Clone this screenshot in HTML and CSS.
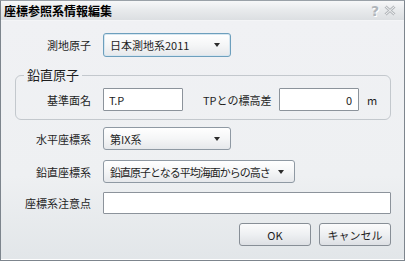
FILE: index.html
```html
<!DOCTYPE html>
<html lang="ja">
<head>
  <meta charset="UTF-8" />
  <title>座標参照系情報編集</title>
  <link rel="stylesheet" href="styles.css">
</head>
<body>
  <div class="window">
    <div class="titlebar">
      <span class="title">座標参照系情報編集</span>
      <span class="tb-icons">
        <span class="help">?</span>
        <svg class="close" width="12" height="11" viewBox="0 0 12 11">
          <path d="M1.5 1.5 L10.5 9.5 M10.5 1.5 L1.5 9.5" stroke="#b4b8bc" stroke-width="3" fill="none" />
          <path d="M1.5 1.5 L10.5 9.5 M10.5 1.5 L1.5 9.5" stroke="#f4f5f6" stroke-width="1" fill="none" />
        </svg>
      </span>
    </div>

    <div class="content">
      <div class="row row-datum">
        <span class="lbl">測地原子</span>
        <div class="combo combo-focus w128"><span>日本測地系2011</span><i class="arrow"></i></div>
      </div>

      <fieldset class="group">
        <legend>鉛直原子</legend>
        <div class="row">
          <span class="lbl lbl-in">基準面名</span>
          <input class="field w80" type="text" value="T.P" />
          <span class="lbl-tp">TPとの標高差</span>
          <input class="field w80 num" type="text" value="0" />
          <span class="unit">m</span>
        </div>
      </fieldset>

      <div class="row row-horiz">
        <span class="lbl">水平座標系</span>
        <div class="combo w128"><span>第IX系</span><i class="arrow"></i></div>
      </div>

      <div class="row row-vert">
        <span class="lbl">鉛直座標系</span>
        <div class="combo w192"><span class="tight">鉛直原子となる平均海面からの高さ</span><i class="arrow"></i></div>
      </div>

      <div class="row row-note">
        <span class="lbl">座標系注意点</span>
        <input class="field w288" type="text" value="" />
      </div>

      <div class="buttons">
        <button class="btn">OK</button>
        <button class="btn">キャンセル</button>
      </div>
    </div>
  </div>
</body>
</html>
```

FILE: styles.css
```css
body {
  margin: 0;
  padding: 0;
  background: #ffffff;
  font-family: "Noto Sans CJK JP", "Liberation Sans", sans-serif;
  font-size: 11px;
  color: #1e1e1e;
}

.window {
  width: 405px;
  height: 261px;
  box-sizing: border-box;
  border: 1px solid #7d858d;
  border-top-color: #9aa1a8;
  display: flex;
  flex-direction: column;
  overflow: hidden;
}

.titlebar {
  height: 19px;
  flex: none;
  display: flex;
  align-items: center;
  justify-content: space-between;
  padding: 0 8px 0 3px;
  background: linear-gradient(#f7f8f9, #e9ebed 45%, #dcdfe2);
  border-bottom: 1px solid #f4f5f7;
}

.title {
  font-size: 12px;
  font-weight: bold;
  color: #000;
  line-height: 19px;
}

.tb-icons {
  display: flex;
  align-items: center;
  gap: 5px;
}

.help {
  font-family: "DejaVu Sans", sans-serif;
  font-weight: bold;
  font-size: 14px;
  line-height: 14px;
  color: #b0b5ba;
  text-shadow: 1px 1px 0 #ffffff;
}

.content {
  flex: 1;
  padding: 12px 13px 0 14px;
  background: linear-gradient(#f0f1f4, #eef0f2 65%, #e2e6e9);
  border-bottom: 1px solid #ffffff;
}

.row {
  display: flex;
  align-items: center;
  height: 23px;
}

.lbl {
  width: 76px;
  margin-right: 12px;
  text-align: right;
  white-space: nowrap;
}

.lbl-in {
  width: 75px;
}

.lbl-tp {
  width: 76px;
  margin-left: 20px;
  white-space: nowrap;
}

.unit {
  margin-left: 8px;
}

.combo {
  height: 23px;
  box-sizing: border-box;
  display: flex;
  align-items: center;
  justify-content: space-between;
  padding: 0 10px 0 6px;
  border: 1px solid #8f99a3;
  border-radius: 3px;
  background: linear-gradient(#ffffff, #f5f6f7 50%, #e6e8eb);
  white-space: nowrap;
}

.combo .tight {
  letter-spacing: -1px;
}

.combo-focus {
  height: 24px;
  border-color: #6d9fbd;
  box-shadow: inset 0 0 0 1px #d6e6f0;
}

.arrow {
  flex: none;
  width: 0;
  height: 0;
  border-left: 3.5px solid transparent;
  border-right: 3.5px solid transparent;
  border-top: 4px solid #2c2c2c;
}

.w128 { width: 128px; }
.w192 { width: 192px; }
.w80 { width: 80px; }
.w288 { width: 288px; }

.field {
  height: 23px;
  box-sizing: border-box;
  margin: 0;
  padding: 0 5px;
  border: 1px solid #8c939b;
  border-radius: 1px;
  background: #ffffff;
  font-family: inherit;
  font-size: 11px;
  color: #1e1e1e;
  outline: none;
}

.num {
  text-align: right;
  padding-right: 6px;
}

.row-datum {
  height: 24px;
}

.group {
  margin: 10px 0 0 0;
  width: 376px;
  box-sizing: border-box;
  padding: 5px 0 8px 0;
  border: 1px solid #c3c8cd;
  border-radius: 6px;
}

.group legend {
  font-size: 13px;
  line-height: 16px;
  padding: 0 3px;
  margin-left: 8px;
  color: #1e1e1e;
}

.row-horiz {
  margin-top: 7px;
}

.row-vert {
  margin-top: 10px;
}

.row-note {
  margin-top: 9px;
  height: 22px;
}

.row-note .field {
  height: 22px;
}

.buttons {
  width: 376px;
  display: flex;
  justify-content: flex-end;
  gap: 8px;
  margin-top: 9px;
}

.btn {
  width: 72px;
  height: 23px;
  padding: 0;
  border: 1px solid #878e96;
  border-radius: 3px;
  background: linear-gradient(#fbfbfc, #eef0f2 50%, #dde0e4);
  font-family: inherit;
  font-size: 11px;
  color: #1e1e1e;
}
```
